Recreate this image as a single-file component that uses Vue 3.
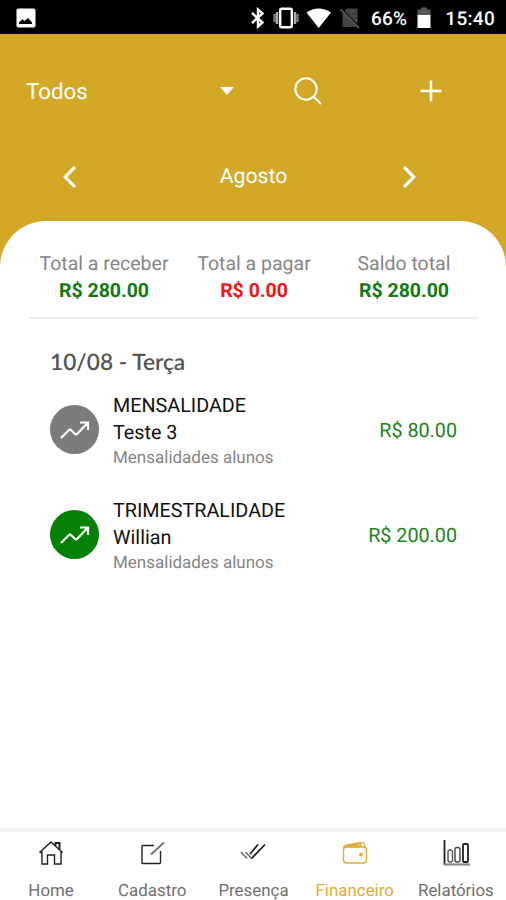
<script setup>
const totals = [
  { label: 'Total a receber', value: 'R$ 280.00', tone: 'green' },
  { label: 'Total a pagar', value: 'R$ 0.00', tone: 'red' },
  { label: 'Saldo total', value: 'R$ 280.00', tone: 'green' },
]
const entries = [
  { title: 'MENSALIDADE', name: 'Teste 3', category: 'Mensalidades alunos', amount: 'R$ 80.00', paid: false },
  { title: 'TRIMESTRALIDADE', name: 'Willian', category: 'Mensalidades alunos', amount: 'R$ 200.00', paid: true },
]
const tabs = [
  { id: 'home', label: 'Home' },
  { id: 'edit', label: 'Cadastro' },
  { id: 'check', label: 'Presença' },
  { id: 'wallet', label: 'Financeiro' },
  { id: 'chart', label: 'Relatórios' },
]
</script>

<template>
  <div class="screen">
    <div class="status">
      <svg class="photo" width="20" height="20" viewBox="0 0 20 20">
        <rect x="0.5" y="0.5" width="19" height="19" rx="2" fill="#fff" />
        <path d="M3 16v-1.500L6.500 11l2 2L12 10l4 4.500V16z" fill="#000" />
      </svg>
      <svg width="16" height="22" viewBox="0 0 16 22" fill="none" stroke="#fff" stroke-width="2.400">
        <path d="M2 6 12.500 15.500 8 19.500V2.500l4.500 4L2 16" />
      </svg>
      <svg class="vibrate" width="26" height="22" viewBox="0 0 26 22">
        <path d="M1.500 7v8M24.500 7v8" stroke="#777" stroke-width="2.500" />
        <path d="M4 5v12M22 5v12" stroke="#aaa" stroke-width="2.500" />
        <rect x="7.200" y="1.700" width="11.600" height="18.600" rx="1.500" fill="none" stroke="#fff" stroke-width="2.400" />
      </svg>
      <svg class="wifi" width="26" height="22" viewBox="0 0 26 22">
        <path d="M0.500 5.500Q12.500-2.500 25 5.500L12.700 21z" fill="#fff" />
      </svg>
      <svg class="sim" width="20" height="22" viewBox="0 0 20 22">
        <path d="M7 1.500h10.500V20H2.500V6z" fill="#444" />
        <path d="M0.500 1 19 19.500" stroke="#000" stroke-width="1.500" />
        <path d="M0.500 2.500 19 21" stroke="#555" stroke-width="1.800" />
      </svg>
      <span class="percent">66%</span>
      <svg class="battery" width="14" height="22" viewBox="0 0 14 22">
        <path d="M4 0.500h6v2h3.500v6H0.500v-6H4z" fill="#555" />
        <path d="M0.500 8h13v13H0.500z" fill="#fff" />
      </svg>
      <span class="clock">15:40</span>
    </div>

    <header class="header">
      <div class="toolbar">
        <div class="filter">
          <span class="filter-name">Todos</span>
          <svg width="14" height="8" viewBox="0 0 14 8"><path d="M0 0h14L7 8z" fill="#fff" /></svg>
        </div>
        <svg class="search" width="28" height="28" viewBox="0 0 28 28" fill="none" stroke="#fff" stroke-width="2">
          <circle cx="12" cy="12" r="10.700" /><path d="m19.500 19.500 7.500 7.500" />
        </svg>
        <svg class="plus" width="22" height="22" viewBox="0 0 22 22" stroke="#fff" stroke-width="2.500">
          <path d="M11 0.500v21M0.500 11h21" />
        </svg>
      </div>
      <div class="month">
        <svg width="15" height="22" viewBox="0 0 15 22" fill="none" stroke="#fff" stroke-width="3.200"><path d="M13 1 3.300 11 13 21" /></svg>
        <span class="month-name">Agosto</span>
        <svg width="14" height="22" viewBox="0 0 14 22" fill="none" stroke="#fff" stroke-width="3.200"><path d="m1 1 9.700 10L1 21" /></svg>
      </div>
    </header>

    <main class="card">
      <section class="totals">
        <div v-for="t in totals" :key="t.label" class="total">
          <span class="total-label">{{ t.label }}</span>
          <strong :class="['total-value', t.tone]">{{ t.value }}</strong>
        </div>
      </section>
      <h2 class="date">10/08 - Terça</h2>
      <article v-for="e in entries" :key="e.title" class="entry">
        <div :class="['badge', { paid: e.paid }]">
          <svg width="30" height="20" viewBox="0 0 30 20" fill="none" stroke="#fff" stroke-width="2.200">
            <path d="m1 18 8-8q1-1 2 0l4 4q1 1 2 0L27.500 3M20 2.500h8v7.500" />
          </svg>
        </div>
        <div class="details">
          <span class="title">{{ e.title }}</span>
          <span class="name">{{ e.name }}</span>
          <span class="category">{{ e.category }}</span>
        </div>
        <span class="amount">{{ e.amount }}</span>
      </article>
    </main>

    <nav class="tabs">
      <div v-for="t in tabs" :key="t.id" :class="['tab', { active: t.id === 'wallet' }]">
        <svg width="28" height="28" viewBox="0 0 28 28" fill="none" stroke="currentColor" stroke-width="1.400">
          <template v-if="t.id === 'home'">
            <path d="M2.500 13.500 14 3l11.500 10.500M5 12.500v12.500h5.500V16h7v9H24V12.500M2.500 13.500H5M23.500 13.500h2" />
            <path d="M18.500 6.500V4h4v6.500" stroke-width="2" />
          </template>
          <template v-else-if="t.id === 'edit'">
            <path d="M16 6.500H5q-1 0-1 1V24q0 .5 1 .5h16.500q1 0 1-1V12" />
            <path d="M13 15.500 26 3.500" stroke="#777" stroke-width="2" />
          </template>
          <template v-else-if="t.id === 'check'">
            <path d="m2 13 6 6.500M6.500 13l6 6.500" stroke="#777" stroke-width="1.800" />
            <path d="m11 15 8-9.500M12.500 19.500 26 5.500" stroke-width="1.800" />
          </template>
          <template v-else-if="t.id === 'wallet'">
            <rect x="2.500" y="8" width="23" height="16" rx="3" />
            <path d="M2.800 9q0-2.500 3.200-3L20 3.500q3-.500 3.500 2V8M5 7.200 20 5.200V7.500H5" />
            <circle cx="20" cy="15.500" r="1.200" fill="currentColor" />
          </template>
          <template v-else>
            <path d="M2.500 1v25" stroke-width="1.800" />
            <path d="M2 25.500h26" stroke="#888" stroke-width="2.200" />
            <rect x="6" y="11" width="4.500" height="12" rx="2" stroke="#555" />
            <rect x="13" y="8.500" width="5" height="14.500" rx="2" stroke="#444" />
            <rect x="21" y="5" width="5" height="18" rx="1" stroke-width="1.800" />
          </template>
        </svg>
        <span>{{ t.label }}</span>
      </div>
    </nav>
  </div>
</template>

<style>
body { margin: 0; }
</style>

<style scoped>
.screen {
  width: 506px;
  height: 900px;
  display: flex;
  flex-direction: column;
  background: linear-gradient(#d4a827 300px, #fff 300px);
  font-family: Roboto, sans-serif;
  text-rendering: geometricPrecision;
  overflow: hidden;
  white-space: nowrap;
}
.screen svg { display: block; flex: none; }
.status {
  height: 34px;
  flex: none;
  box-sizing: border-box;
  padding: 2px 11px 0 16px;
  display: flex;
  align-items: center;
  background: #000;
  color: #fff;
  font-size: 19px;
  font-weight: 500;
}
.photo { margin-right: auto; }
.vibrate { margin-left: 7px; }
.wifi { margin-left: 7px; }
.sim { margin-left: 8px; }
.percent { margin-left: 11px; letter-spacing: 0.200px; }
.battery { margin-left: 10px; }
.clock { margin-left: 14px; letter-spacing: 0.300px; }
.header { height: 187px; flex: none; color: #fff; }
.toolbar { height: 114px; display: flex; align-items: center; }
.filter {
  width: 208px;
  margin-left: 26px;
  display: flex;
  align-items: center;
  justify-content: space-between;
  font-size: 22.300px;
}
.filter-name { padding-top: 2px; }
.search { margin-left: 60px; }
.plus { margin-left: 98px; }
.month {
  display: grid;
  grid-template-columns: 41px 1fr 41px;
  align-items: center;
  padding: 0 62px;
  height: 57px;
}
.month-name { font-size: 21.200px; text-align: center; padding-left: 1px; }
.card {
  flex: 1;
  background: #fff;
  border-radius: 46px 46px 0 0;
}
.totals {
  margin: 0 28px;
  height: 96px;
  border-bottom: 2px solid #edf0f1;
  display: grid;
  grid-template-columns: repeat(3, 1fr);
}
.total { display: flex; flex-direction: column; align-items: center; padding: 30px 0 0 2px; }
.total-label { font-size: 19.500px; line-height: 26px; color: #858585; }
.total-value { font-size: 19.500px; line-height: 27px; font-weight: 700; }
.green { color: #117a11; }
.red { color: #f81212; }
.date {
  margin: 27px 0 0 50px;
  font: 600 22.700px/32px Lato, sans-serif;
  color: #555;
}
.entry {
  display: flex;
  align-items: center;
  margin: 12px 49px 26px 50px;
  height: 79px;
}
.badge {
  width: 49px;
  height: 49px;
  border-radius: 50%;
  background: #7c7c7c;
  display: flex;
  align-items: center;
  justify-content: center;
}
.badge.paid { background: #058205; }
.details { display: flex; flex-direction: column; margin-left: 14px; padding-top: 2px; }
.title, .name { font-size: 19.750px; line-height: 27px; color: #111; }
.category { font-size: 17px; line-height: 24px; color: #858585; }
.amount { margin-left: auto; font-size: 19.750px; color: #218321; padding-top: 1px; }
.tabs {
  height: 68px;
  flex: none;
  border-top: 4px solid #f5f5f5;
  display: grid;
  grid-template-columns: repeat(5, 1fr);
}
.tab {
  display: flex;
  flex-direction: column;
  align-items: center;
  color: #222;
  padding-left: 1px;
}
.tab svg { margin-top: 7px; }
.tab span { font-size: 16.900px; line-height: 22px; margin-top: 13px; color: #707070; }
.tab.active, .tab.active span { color: #dcae38; }
</style>
